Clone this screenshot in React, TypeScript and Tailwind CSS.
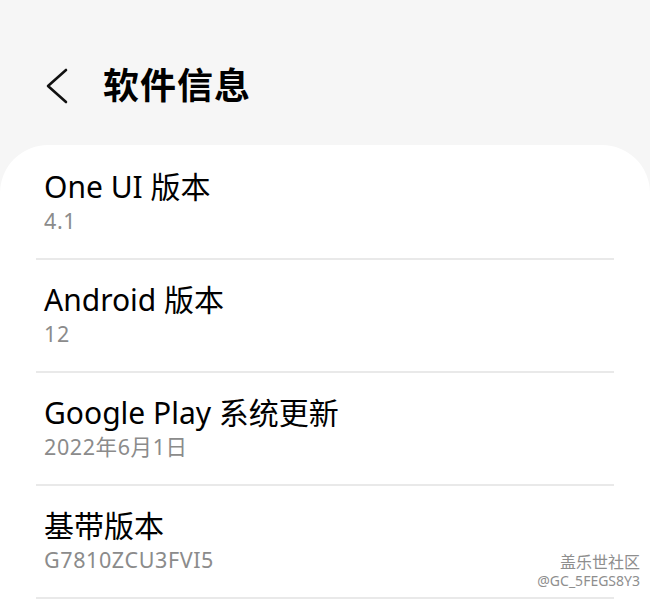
const rows = [
  { title: 'One UI 版本', value: '4.1' },
  { title: 'Android 版本', value: '12' },
  { title: 'Google Play 系统更新', value: '2022年6月1日' },
  { title: '基带版本', value: 'G7810ZCU3FVI5' },
];

const font = { fontFamily: '"Noto Sans", "Noto Sans CJK SC", sans-serif' };

export default function App() {
  return (
    <div className="w-[650px] h-[599px] overflow-hidden bg-[#f6f6f6] relative" style={font}>
      {/* header */}
      <div className="flex items-center h-[145px] pt-[26px]">
        <div className="w-[103px] flex pl-[45px]">
          <svg width="26" height="38" viewBox="0 0 26 38" fill="none">
            <path d="M21 3 L3 19 L21 35" stroke="#111" strokeWidth="2.6" strokeLinecap="round" strokeLinejoin="round" />
          </svg>
        </div>
        <h1 className="text-[36px] font-bold text-black leading-none tracking-[1px]">软件信息</h1>
      </div>

      {/* card */}
      <div className="bg-white rounded-t-[48px] pt-[2px]">
        {rows.map((r) => (
          <div key={r.title} className="mx-[36px] border-b-2 border-[#e9e9e9]">
            <div className="px-[8px] h-[111px] flex flex-col pt-[23px]">
              <div className="text-[30px] text-black leading-[34px]">{r.title}</div>
              <div className="text-[21.5px] text-[#8b8b8b] leading-[24px] mt-[5px] tracking-[0.6px]">{r.value}</div>
            </div>
          </div>
        ))}
      </div>

      {/* watermark */}
      <div className="absolute right-[10px] bottom-[10px] flex flex-col items-end text-[#8e8e8e] leading-tight">
        <span className="text-[16px]">盖乐世社区</span>
        <span className="text-[14px]">@GC_5FEGS8Y3</span>
      </div>
    </div>
  );
}
